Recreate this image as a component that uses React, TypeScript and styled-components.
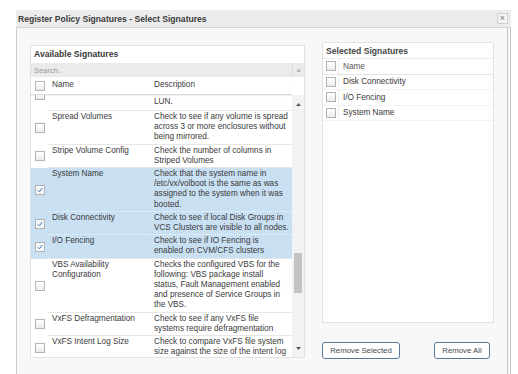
import React from 'react';
import styled, { createGlobalStyle } from 'styled-components';

const GlobalStyle = createGlobalStyle`
  html, body {
    margin: 0;
    padding: 0;
    background: #ffffff;
    overflow: hidden;
  }

  body {
    font-family: 'Liberation Sans', Arial, sans-serif;
    color: #333333;
  }
`;

const Page = styled.div`
  width: 518px;
  height: 374px;
  padding: 10px 0 0 16px;
  box-sizing: border-box;
  overflow: hidden;
`;

const Dialog = styled.div`
  width: 495px;
  height: 380px;

  display: flex;
  flex-direction: column;

  background: #f8f8f8;
`;

const TitleBar = styled.div`
  height: 17px;
  padding: 0 3px 0 2px;

  display: flex;
  align-items: center;
  justify-content: space-between;

  background: #ececec;
  border-bottom: 1px solid #d4d4d4;
`;

const Title = styled.span`
  font-size: 8.6px;
  font-weight: 700;
  color: #3c3c3c;
`;

const CloseButton = styled.span`
  width: 9px;
  height: 9px;

  display: flex;
  align-items: center;
  justify-content: center;

  font-size: 9px;
  line-height: 1;
  color: #777777;

  background: #f6f6f6;
  border: 1px solid #cfcfcf;
`;

const Body = styled.div`
  flex: 1;
  padding: 14px 12px 0 13px;

  display: flex;
  gap: 17px;

  border-left: 1px solid #cfcfcf;
  border-right: 4px double #c6c6c6;
`;

const LeftColumn = styled.div`
  width: 275px;
  margin-top: 3px;
`;

const Panel = styled.div<{ $height: number }>`
  height: ${(props) => props.$height}px;

  display: flex;
  flex-direction: column;

  background: #ffffff;
  border: 1px solid #e2e2e2;
  box-sizing: border-box;
  overflow: hidden;
`;

const PanelHeading = styled.div`
  height: 16px;
  padding: 0 3px;

  display: flex;
  align-items: center;

  font-size: 8.6px;
  font-weight: 700;
  color: #3a3a3a;
`;

const SearchBox = styled.div`
  height: 14px;
  margin-top: 1px;
  padding: 0 0 0 3px;

  display: flex;
  align-items: center;
  justify-content: space-between;

  background: #ebebeb;
`;

const SearchText = styled.span`
  font-size: 7.6px;
  color: #9a9a9a;
`;

const ClearButton = styled.span`
  width: 11px;
  height: 14px;

  display: flex;
  align-items: center;
  justify-content: center;

  font-size: 8px;
  color: #888888;
  border-left: 1px solid #dddddd;
`;

const GridRow = styled.div<{ $selected?: boolean }>`
  display: grid;
  grid-template-columns: 17px 103px 1fr;

  font-size: 8.2px;
  line-height: 10.2px;

  background: ${(props) => (props.$selected ? '#c9dff2' : 'transparent')};
`;

const HeaderRow = styled(GridRow)`
  height: 16px;
  margin-top: 1px;
  margin-right: 12px;
  align-items: center;

  color: #3a3a3a;
  border-bottom: 1px solid #d8d8d8;
  box-shadow: 0 1px 1px rgba(0, 0, 0, 0.06);
`;

const PartialRow = styled(GridRow)`
  height: 16px;
  overflow: hidden;
`;

const CheckCell = styled.div<{ $top?: number }>`
  display: flex;
  align-items: ${(props) => (props.$top !== undefined ? 'flex-start' : 'center')};
  justify-content: center;

  & > span {
    margin-top: ${(props) => props.$top ?? 0}px;
  }
`;

type Border = 'solid' | 'dotted' | 'none';

const TextCell = styled.div<{ $border: Border; $left: number }>`
  padding: 1px 1px 1px ${(props) => props.$left}px;

  color: #3a3a3a;
  white-space: pre-line;
  border-bottom: ${(props) =>
    props.$border === 'none'
      ? '1px solid transparent'
      : props.$border === 'dotted'
        ? '1px dotted #f1f6fb'
        : '1px solid #e6e6e6'};
`;

const TableBody = styled.div`
  flex: 1;

  display: flex;
  overflow: hidden;
`;

const RowList = styled.div`
  flex: 1;
`;

const ScrollBar = styled.div`
  width: 12px;

  display: flex;
  flex-direction: column;

  background: #f2f2f2;
`;

const ScrollArrow = styled.div`
  height: 18px;

  display: flex;
  align-items: center;
  justify-content: center;
`;

const ScrollTrack = styled.div`
  flex: 1;
`;

const ScrollThumb = styled.div<{ $top: number; $size: number }>`
  width: 8px;
  height: ${(props) => props.$size}px;
  margin: ${(props) => props.$top}px auto 0;

  background: #c3c3c3;
`;

const Box = styled.span<{ $checked?: boolean }>`
  width: 8px;
  height: 8px;
  flex-shrink: 0;

  display: flex;
  align-items: center;
  justify-content: center;

  background: ${(props) => (props.$checked ? '#f4f8fc' : 'linear-gradient(#ffffff, #ececec)')};
  border: 1px solid #b3b3b3;
`;

const RightColumn = styled.div`
  width: 172px;
  height: 317px;

  display: flex;
  flex-direction: column;
  justify-content: space-between;
`;

const SelectedHeading = styled(PanelHeading)`
  height: 15px;
  color: #444444;
  border-bottom: 1px solid #ececec;
`;

const SelectedRow = styled.div<{ $head?: boolean }>`
  height: 14.5px;

  display: grid;
  grid-template-columns: 16px 1fr;
  align-items: center;

  font-size: 8.2px;
  color: ${(props) => (props.$head ? '#555555' : '#3a3a3a')};
  border-bottom: 1px solid ${(props) => (props.$head ? '#e4e4e4' : '#f3f3f3')};
`;

const SelectedCheck = styled(CheckCell)`
  height: 100%;
  border-right: 1px solid #efefef;
`;

const SelectedName = styled.span`
  padding-left: 4px;
`;

const ButtonRow = styled.div`
  display: flex;
  gap: 34px;
`;

const Button = styled.button<{ $width: number }>`
  width: ${(props) => props.$width}px;
  height: 17px;
  padding: 0;

  font-family: 'Liberation Sans', Arial, sans-serif;
  font-size: 7.8px;
  color: #4a4a4a;

  background: #ffffff;
  border: 1px solid #58789a;
  border-radius: 3px;
`;

type Signature = {
  name: string;
  description: string;
  selected?: boolean;
  dotted?: boolean;
};

// descriptions keep the line breaks of the original grid
const signatures: Signature[] = [
  {
    name: 'Spread Volumes',
    description: 'Check to see if any volume is spread\nacross 3 or more enclosures without\nbeing mirrored.',
  },
  {
    name: 'Stripe Volume Config',
    description: 'Check the number of columns in\nStriped Volumes',
  },
  {
    name: 'System Name',
    description:
      'Check that the system name in\n/etc/vx/volboot is the same as was\nassigned to the system when it was\nbooted.',
    selected: true,
    dotted: true,
  },
  {
    name: 'Disk Connectivity',
    description: 'Check to see if local Disk Groups in\nVCS Clusters are visible to all nodes.',
    selected: true,
    dotted: true,
  },
  {
    name: 'I/O Fencing',
    description: 'Check to see if IO Fencing is\nenabled on CVM/CFS clusters',
    selected: true,
  },
  {
    name: 'VBS Availability Configuration',
    description:
      'Checks the configured VBS for the\nfollowing: VBS package install\nstatus, Fault Management enabled\nand presence of Service Groups in\nthe VBS.',
  },
  {
    name: 'VxFS Defragmentation',
    description: 'Check to see if any VxFS file\nsystems require defragmentation',
  },
  {
    name: 'VxFS Intent Log Size',
    description: 'Check to compare VxFS file system\nsize against the size of the intent log',
  },
];

const selectedNames = ['Disk Connectivity', 'I/O Fencing', 'System Name'];

function CheckMark() {
  return (
    <svg width="6" height="6" viewBox="0 0 6 6">
      <path d="M0.8 3.2 L2.4 4.8 L5.2 1" fill="none" stroke="#4a74a8" strokeWidth="1" />
    </svg>
  );
}

function Checkbox({ checked }: { checked?: boolean }) {
  return <Box $checked={checked}>{checked && <CheckMark />}</Box>;
}

function Arrow({ up }: { up?: boolean }) {
  return (
    <svg width="5" height="3" viewBox="0 0 5 3">
      <path d={up ? 'M0 3 L2.5 0 L5 3 Z' : 'M0 0 L2.5 3 L5 0 Z'} fill="#5a5a5a" />
    </svg>
  );
}

export default function App() {
  return (
    <Page>
      <GlobalStyle />
      <Dialog>
        <TitleBar>
          <Title>Register Policy Signatures - Select Signatures</Title>
          <CloseButton>×</CloseButton>
        </TitleBar>

        <Body>
          <LeftColumn>
            <Panel $height={313}>
              <PanelHeading>Available Signatures</PanelHeading>
              <SearchBox>
                <SearchText>Search..</SearchText>
                <ClearButton>×</ClearButton>
              </SearchBox>

              <HeaderRow>
                <CheckCell>
                  <Checkbox />
                </CheckCell>
                <TextCell $border="none" $left={4}>
                  Name
                </TextCell>
                <TextCell $border="none" $left={3}>
                  Description
                </TextCell>
              </HeaderRow>

              <TableBody>
                <RowList>
                  {/* row scrolled mostly out of view */}
                  <PartialRow>
                    <CheckCell $top={-5}>
                      <Checkbox />
                    </CheckCell>
                    <TextCell $border="solid" $left={4} />
                    <TextCell $border="solid" $left={3}>
                      <div style={{ paddingTop: 1 }}>LUN.</div>
                    </TextCell>
                  </PartialRow>

                  {signatures.map((item) => (
                    <GridRow key={item.name} $selected={item.selected}>
                      <CheckCell>
                        <Checkbox checked={item.selected} />
                      </CheckCell>
                      <TextCell $border={item.dotted ? 'dotted' : 'solid'} $left={4}>
                        {item.name}
                      </TextCell>
                      <TextCell $border={item.dotted ? 'dotted' : 'solid'} $left={3}>
                        {item.description}
                      </TextCell>
                    </GridRow>
                  ))}
                </RowList>
                <ScrollBar>
                  <ScrollArrow>
                    <Arrow up />
                  </ScrollArrow>
                  <ScrollTrack>
                    <ScrollThumb $top={140} $size={40} />
                  </ScrollTrack>
                  <ScrollArrow>
                    <Arrow />
                  </ScrollArrow>
                </ScrollBar>
              </TableBody>
            </Panel>
          </LeftColumn>

          <RightColumn>
            <Panel $height={281}>
              <SelectedHeading>Selected Signatures</SelectedHeading>
              <SelectedRow $head>
                <SelectedCheck>
                  <Checkbox />
                </SelectedCheck>
                <SelectedName>Name</SelectedName>
              </SelectedRow>
              {selectedNames.map((name) => (
                <SelectedRow key={name}>
                  <SelectedCheck>
                    <Checkbox />
                  </SelectedCheck>
                  <SelectedName>{name}</SelectedName>
                </SelectedRow>
              ))}
            </Panel>

            <ButtonRow>
              <Button $width={78}>Remove Selected</Button>
              <Button $width={56}>Remove All</Button>
            </ButtonRow>
          </RightColumn>
        </Body>
      </Dialog>
    </Page>
  );
}
